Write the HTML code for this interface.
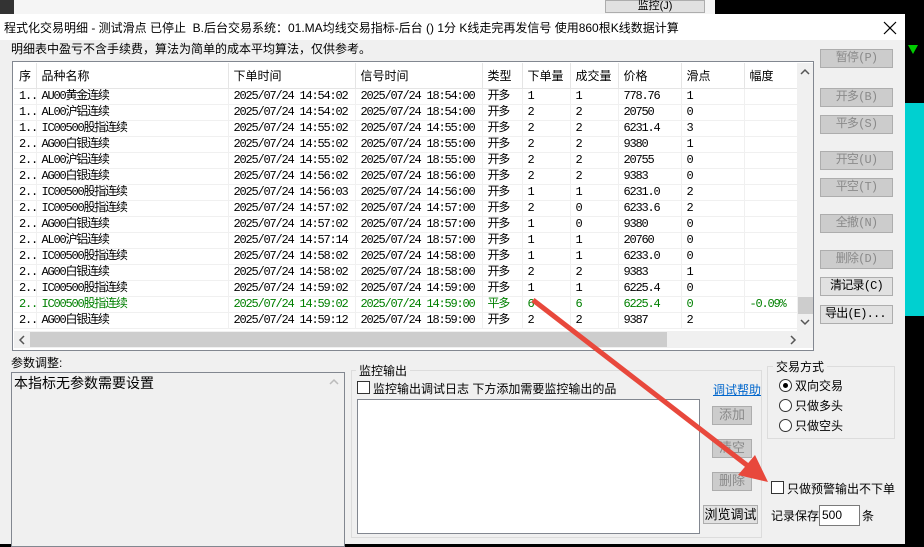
<!DOCTYPE html>
<html><head><meta charset="utf-8"><style>
*{margin:0;padding:0;box-sizing:border-box}
body{width:924px;height:544px;overflow:hidden;background:#000;position:relative;font-family:"Liberation Sans","Noto Sans CJK SC",sans-serif;font-size:12px;color:#000}
.a{position:absolute;white-space:nowrap}
.btn{position:absolute;background:#ccc;border:1px solid #adadad;color:#8a8a8a;text-align:center;font-size:12px;letter-spacing:-0.8px;line-height:17px;white-space:nowrap;overflow:hidden;font-family:"Liberation Mono","Noto Sans CJK SC",monospace}
.en{background:#e1e1e1;color:#000}
.cb{position:absolute;width:13px;height:13px;border:1px solid #333;background:#fff}
.rd{position:absolute;width:13px;height:13px;border:1px solid #333;border-radius:50%;background:#fff}
table{border-collapse:collapse;table-layout:fixed}
td{height:16px;padding:0 0 0 5px;border-right:1px solid #f0f0f0;border-bottom:1px solid #f0f0f0;white-space:nowrap;overflow:hidden;font-family:"Liberation Mono","Noto Sans CJK SC",monospace;font-size:12px;letter-spacing:-1.2px;line-height:15px}
th{height:25px;font-weight:normal;text-align:left;padding-left:5px;border-right:1px solid #e5e5e5;border-bottom:1px solid #e5e5e5;font-size:12px}
tr.g td{color:#008000}
</style></head><body>
<div class="a" style="left:0;top:0;width:715px;height:14px;background:#f5f5f5"></div>
<div class="a" style="left:0;top:0;width:14px;height:14px;background:#333"></div>
<div class="a" style="left:605px;top:0;width:100px;height:13px;background:#e1e1e1;border:1px solid #adadad;text-align:center;font-size:11px;line-height:10px">监控(J)</div>
<div class="a" style="left:905px;top:103px;width:19px;height:213px;background:#00d0d0"></div>
<div class="a" style="left:908px;top:45px;width:0;height:0;border-left:5px solid transparent;border-right:5px solid transparent;border-top:9px solid #0c0"></div>
<div class="a" style="left:0;top:14px;width:905px;height:530px;background:#f0f0f0"></div>
<div class="a" style="left:0;top:14px;width:905px;height:26px;background:#fff"></div>
<div class="a" style="left:4px;top:19px;font-size:12px">程式化交易明细 - 测试滑点 已停止&nbsp;&nbsp;B.后台交易系统：01.MA均线交易指标-后台 () 1分 K线走完再发信号 使用860根K线数据计算</div>
<svg class="a" style="left:883px;top:21px" width="14" height="14"><path d="M1 1L13 13M13 1L1 13" stroke="#000" stroke-width="1.2"/></svg>
<div class="a" style="left:11px;top:40px;font-size:12px">明细表中盈亏不含手续费，算法为简单的成本平均算法，仅供参考。</div>
<div class="a" style="left:12px;top:61px;width:802px;height:290px;border:1px solid #828790;background:#fff;overflow:hidden">
<table style="position:absolute;left:1px;top:1px;width:783px">
<colgroup><col style="width:22px"><col style="width:192px"><col style="width:127px"><col style="width:127px"><col style="width:40px"><col style="width:48px"><col style="width:48px"><col style="width:63px"><col style="width:63px"><col style="width:53px"></colgroup>
<tr><th>序</th><th>品种名称</th><th>下单时间</th><th>信号时间</th><th>类型</th><th>下单量</th><th>成交量</th><th>价格</th><th>滑点</th><th>幅度</th></tr>
<tr><td>1..</td><td>AU00黄金连续</td><td>2025/07/24 14:54:02</td><td>2025/07/24 18:54:00</td><td>开多</td><td>1</td><td>1</td><td>778.76</td><td>1</td><td></td></tr>
<tr><td>1..</td><td>AL00沪铝连续</td><td>2025/07/24 14:54:02</td><td>2025/07/24 18:54:00</td><td>开多</td><td>2</td><td>2</td><td>20750</td><td>0</td><td></td></tr>
<tr><td>1..</td><td>IC00500股指连续</td><td>2025/07/24 14:55:02</td><td>2025/07/24 14:55:00</td><td>开多</td><td>2</td><td>2</td><td>6231.4</td><td>3</td><td></td></tr>
<tr><td>2..</td><td>AG00白银连续</td><td>2025/07/24 14:55:02</td><td>2025/07/24 18:55:00</td><td>开多</td><td>2</td><td>2</td><td>9380</td><td>1</td><td></td></tr>
<tr><td>2..</td><td>AL00沪铝连续</td><td>2025/07/24 14:55:02</td><td>2025/07/24 18:55:00</td><td>开多</td><td>2</td><td>2</td><td>20755</td><td>0</td><td></td></tr>
<tr><td>2..</td><td>AG00白银连续</td><td>2025/07/24 14:56:02</td><td>2025/07/24 18:56:00</td><td>开多</td><td>2</td><td>2</td><td>9383</td><td>0</td><td></td></tr>
<tr><td>2..</td><td>IC00500股指连续</td><td>2025/07/24 14:56:03</td><td>2025/07/24 14:56:00</td><td>开多</td><td>1</td><td>1</td><td>6231.0</td><td>2</td><td></td></tr>
<tr><td>2..</td><td>IC00500股指连续</td><td>2025/07/24 14:57:02</td><td>2025/07/24 14:57:00</td><td>开多</td><td>2</td><td>0</td><td>6233.6</td><td>2</td><td></td></tr>
<tr><td>2..</td><td>AG00白银连续</td><td>2025/07/24 14:57:02</td><td>2025/07/24 18:57:00</td><td>开多</td><td>1</td><td>0</td><td>9380</td><td>0</td><td></td></tr>
<tr><td>2..</td><td>AL00沪铝连续</td><td>2025/07/24 14:57:14</td><td>2025/07/24 18:57:00</td><td>开多</td><td>1</td><td>1</td><td>20760</td><td>0</td><td></td></tr>
<tr><td>2..</td><td>IC00500股指连续</td><td>2025/07/24 14:58:02</td><td>2025/07/24 14:58:00</td><td>开多</td><td>1</td><td>1</td><td>6233.0</td><td>0</td><td></td></tr>
<tr><td>2..</td><td>AG00白银连续</td><td>2025/07/24 14:58:02</td><td>2025/07/24 18:58:00</td><td>开多</td><td>2</td><td>2</td><td>9383</td><td>1</td><td></td></tr>
<tr><td>2..</td><td>IC00500股指连续</td><td>2025/07/24 14:59:02</td><td>2025/07/24 14:59:00</td><td>开多</td><td>1</td><td>1</td><td>6225.4</td><td>0</td><td></td></tr>
<tr class="g"><td>2..</td><td>IC00500股指连续</td><td>2025/07/24 14:59:02</td><td>2025/07/24 14:59:00</td><td>平多</td><td>6</td><td>6</td><td>6225.4</td><td>0</td><td>-0.09%</td></tr>
<tr><td>2..</td><td>AG00白银连续</td><td>2025/07/24 14:59:12</td><td>2025/07/24 18:59:00</td><td>开多</td><td>2</td><td>2</td><td>9387</td><td>2</td><td></td></tr>
</table>
<div class="a" style="left:784px;top:1px;width:17px;height:268px;background:#f0f0f0"></div>
<svg class="a" style="left:787px;top:6px" width="10" height="8"><path d="M1 6L5 2L9 6" stroke="#555" stroke-width="1.5" fill="none"/></svg>
<svg class="a" style="left:787px;top:256px" width="10" height="8"><path d="M1 2L5 6L9 2" stroke="#555" stroke-width="1.5" fill="none"/></svg>
<div class="a" style="left:785px;top:235px;width:15px;height:17px;background:#cdcdcd"></div>
<div class="a" style="left:1px;top:269px;width:800px;height:17px;background:#f0f0f0"></div>
<div class="a" style="left:17px;top:270px;width:637px;height:15px;background:#cdcdcd"></div>
<svg class="a" style="left:5px;top:273px" width="8" height="10"><path d="M6 1L2 5L6 9" stroke="#555" stroke-width="1.5" fill="none"/></svg>
<svg class="a" style="left:776px;top:273px" width="8" height="10"><path d="M2 1L6 5L2 9" stroke="#555" stroke-width="1.5" fill="none"/></svg>
</div>
<div class="btn" style="left:820px;top:49px;width:73px;height:19px">暂停(P)</div>
<div class="btn" style="left:820px;top:88px;width:73px;height:19px">开多(B)</div>
<div class="btn" style="left:820px;top:115px;width:73px;height:19px">平多(S)</div>
<div class="btn" style="left:820px;top:151px;width:73px;height:19px">开空(U)</div>
<div class="btn" style="left:820px;top:178px;width:73px;height:19px">平空(T)</div>
<div class="btn" style="left:820px;top:214px;width:73px;height:19px">全撤(N)</div>
<div class="btn" style="left:820px;top:250px;width:73px;height:19px">删除(D)</div>
<div class="btn en" style="left:820px;top:277px;width:73px;height:19px">清记录(C)</div>
<div class="btn en" style="left:820px;top:305px;width:73px;height:19px;text-align:left;padding-left:4px">导出(E)...</div>
<div class="a" style="left:11px;top:354px">参数调整:</div>
<div class="a" style="left:11px;top:372px;width:334px;height:175px;border:1px solid #828790;background:#f0f0f0"></div>
<div class="a" style="left:14px;top:373px;font-size:14px">本指标无参数需要设置</div>
<div class="a" style="left:326px;top:373px;width:17px;height:170px;background:#f0f0f0"></div>
<svg class="a" style="left:329px;top:378px" width="10" height="8"><path d="M1 6L5 2L9 6" stroke="#bbb" stroke-width="1.5" fill="none"/></svg>
<div class="a" style="left:351px;top:370px;width:411px;height:168px;border:1px solid #dcdcdc"></div>
<div class="a" style="left:356px;top:362px;background:#f0f0f0;padding:0 3px">监控输出</div>
<div class="cb" style="left:357px;top:381px"></div>
<div class="a" style="left:373px;top:380px">监控输出调试日志 下方添加需要监控输出的品</div>
<div class="a" style="left:357px;top:399px;width:343px;height:135px;border:1px solid #828790;background:#fff"></div>
<div class="a" style="left:713px;top:381px;color:#0066cc;text-decoration:underline">调试帮助</div>
<div class="btn" style="left:712px;top:406px;width:40px;height:19px;font-size:13px;letter-spacing:0">添加</div>
<div class="btn" style="left:712px;top:439px;width:40px;height:19px;font-size:13px;letter-spacing:0">清空</div>
<div class="btn" style="left:712px;top:472px;width:40px;height:19px;font-size:13px;letter-spacing:0">删除</div>
<div class="btn en" style="left:703px;top:505px;width:55px;height:19px;font-size:13px;letter-spacing:0;font-family:'Liberation Sans','Noto Sans CJK SC',sans-serif">浏览调试</div>
<div class="a" style="left:767px;top:366px;width:128px;height:73px;border:1px solid #dcdcdc"></div>
<div class="a" style="left:773px;top:358px;background:#f0f0f0;padding:0 3px">交易方式</div>
<div class="rd" style="left:779px;top:379px"><div style="position:absolute;left:3px;top:3px;width:5px;height:5px;border-radius:50%;background:#000"></div></div>
<div class="a" style="left:795px;top:377px">双向交易</div>
<div class="rd" style="left:779px;top:399px"></div>
<div class="a" style="left:795px;top:397px">只做多头</div>
<div class="rd" style="left:779px;top:419px"></div>
<div class="a" style="left:795px;top:417px">只做空头</div>
<div class="cb" style="left:771px;top:481px"></div>
<div class="a" style="left:787px;top:480px">只做预警输出不下单</div>
<div class="a" style="left:771px;top:507px">记录保存</div>
<div class="a" style="left:819px;top:505px;width:41px;height:21px;border:1px solid #7a7a7a;background:#fff;padding:2px 2px;font-size:12px">500</div>
<div class="a" style="left:862px;top:507px">条</div>
<svg class="a" style="left:0;top:0" width="924" height="544"><line x1="533" y1="300" x2="748" y2="466" stroke="#e8483c" stroke-width="5"/><polygon points="768,482 738,475 755,455" fill="#e8483c"/></svg>
</body></html>
